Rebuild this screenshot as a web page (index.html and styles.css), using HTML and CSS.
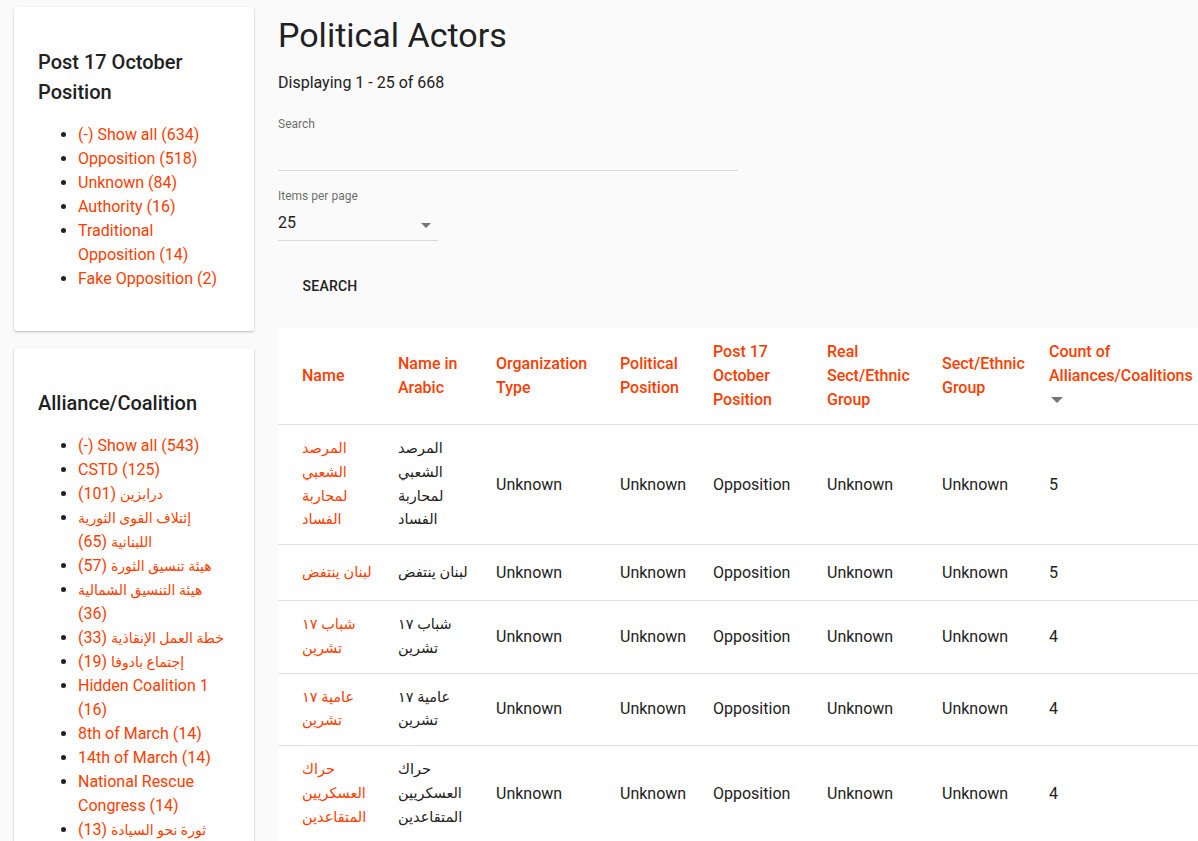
FILE: index.html
```html
<!DOCTYPE html>
<html lang="en">
<head>
<meta charset="utf-8">
<title>Political Actors</title>
<link rel="stylesheet" href="styles.css">
</head>
<body>
<div class="layout">
  <aside class="sidebar">
    <section class="card">
      <h2 class="card-title">Post 17 October Position</h2>
      <ul class="facet-list">
        <li><a href="#">(-) Show all (634)</a></li>
        <li><a href="#">Opposition (518)</a></li>
        <li><a href="#">Unknown (84)</a></li>
        <li><a href="#">Authority (16)</a></li>
        <li><a href="#">Traditional Opposition (14)</a></li>
        <li><a href="#">Fake Opposition (2)</a></li>
      </ul>
    </section>
    <section class="card">
      <h2 class="card-title">Alliance/Coalition</h2>
      <ul class="facet-list">
        <li><a href="#">(-) Show all (543)</a></li>
        <li><a href="#">CSTD (125)</a></li>
        <li><a href="#"><span class="ar-s">درابزين</span> (101)</a></li>
        <li><a href="#"><span class="ar-s">إئتلاف القوى الثورية اللبنانية</span> (65)</a></li>
        <li><a href="#"><span class="ar-s">هيئة تنسيق الثورة</span> (57)</a></li>
        <li><a href="#"><span class="ar-s">هيئة التنسيق الشمالية</span> (36)</a></li>
        <li><a href="#"><span class="ar-s">خطة العمل الإنقاذية</span> (33)</a></li>
        <li><a href="#"><span class="ar-s">إجتماع بادوفا</span> (19)</a></li>
        <li><a href="#">Hidden Coalition 1 (16)</a></li>
        <li><a href="#">8th of March (14)</a></li>
        <li><a href="#">14th of March (14)</a></li>
        <li><a href="#">National Rescue Congress (14)</a></li>
        <li><a href="#"><span class="ar-s">ثورة نحو السيادة</span> (13)</a></li>
      </ul>
    </section>
  </aside>

  <main class="main">
    <h1 class="page-title">Political Actors</h1>
    <p class="summary">Displaying 1 - 25 of 668</p>

    <form class="filters">
      <div class="field field-search">
        <label class="field-label" for="q">Search</label>
        <input class="text-input" id="q" type="text">
      </div>
      <div class="field field-select">
        <span class="field-label">Items per page</span>
        <div class="select">
          <span class="select-value">25</span>
          <span class="select-arrow"></span>
        </div>
      </div>
      <button class="btn" type="button">Search</button>
    </form>

    <table class="data-table">
      <thead>
        <tr>
          <th class="c-name">Name</th>
          <th class="c-arabic">Name in Arabic</th>
          <th class="c-org">Organization Type</th>
          <th class="c-pol">Political Position</th>
          <th class="c-post">Post 17 October Position</th>
          <th class="c-real">Real Sect/Ethnic Group</th>
          <th class="c-sect">Sect/Ethnic Group</th>
          <th class="c-count">Count of Alliances/Coalitions<span class="sort"></span></th>
        </tr>
      </thead>
      <tbody>
        <tr>
          <td class="ar"><a href="#">المرصد الشعبي لمحاربة الفساد</a></td>
          <td class="ar">المرصد الشعبي لمحاربة الفساد</td>
          <td>Unknown</td><td>Unknown</td><td>Opposition</td><td>Unknown</td><td>Unknown</td><td>5</td>
        </tr>
        <tr>
          <td class="ar"><a href="#">لبنان ينتفض</a></td>
          <td class="ar">لبنان ينتفض</td>
          <td>Unknown</td><td>Unknown</td><td>Opposition</td><td>Unknown</td><td>Unknown</td><td>5</td>
        </tr>
        <tr>
          <td class="ar"><a href="#">شباب ١٧ تشرين</a></td>
          <td class="ar">شباب ١٧ تشرين</td>
          <td>Unknown</td><td>Unknown</td><td>Opposition</td><td>Unknown</td><td>Unknown</td><td>4</td>
        </tr>
        <tr>
          <td class="ar"><a href="#">عامية ١٧ تشرين</a></td>
          <td class="ar">عامية ١٧ تشرين</td>
          <td>Unknown</td><td>Unknown</td><td>Opposition</td><td>Unknown</td><td>Unknown</td><td>4</td>
        </tr>
        <tr>
          <td class="ar"><a href="#">حراك العسكريين المتقاعدين</a></td>
          <td class="ar">حراك العسكريين المتقاعدين</td>
          <td>Unknown</td><td>Unknown</td><td>Opposition</td><td>Unknown</td><td>Unknown</td><td>4</td>
        </tr>
      </tbody>
    </table>
  </main>
</div>
</body>
</html>
```
FILE: styles.css
```css
html {
  scrollbar-width: none;
}

body {
  margin: 0;
  background: #fafafa;
  color: #212121;
  font-family: Roboto, "DejaVu Sans", sans-serif;
  font-size: 16px;
  line-height: 24px;
}

a {
  color: #ff3d00;
  text-decoration: none;
}

.layout {
  display: flex;
  align-items: flex-start;
  gap: 24px;
  padding: 7px 0 0 14px;
}

.sidebar {
  flex: 0 0 240px;
  display: flex;
  flex-direction: column;
  gap: 17px;
}

.card {
  background: #fff;
  border-radius: 3px;
  box-shadow: 0 1px 3px rgba(0, 0, 0, 0.14), 0 1px 2px rgba(0, 0, 0, 0.12);
  padding: 24px;
}

.card-title {
  margin: 16px 0;
  font-size: 20px;
  font-weight: 500;
  line-height: 30px;
}

.facet-list {
  margin: 16px 0;
  padding-left: 40px;
}

.ar-s {
  font-size: 14px;
}

.main {
  flex: 1;
  min-width: 0;
}

.page-title {
  margin: 8px 0 16px;
  font-size: 34px;
  font-weight: 400;
  line-height: 40px;
}

.summary {
  margin: 0;
}

.filters {
  margin-top: 21px;
}

.field-label {
  display: block;
  font-size: 12px;
  line-height: 16px;
  color: rgba(0, 0, 0, 0.6);
}

.field-search {
  width: 460px;
}

.text-input {
  display: block;
  box-sizing: border-box;
  width: 100%;
  height: 39px;
  border: 0;
  border-bottom: 1px solid rgba(0, 0, 0, 0.13);
  background: transparent;
  font: inherit;
  outline: none;
  padding: 0;
}

.field-select {
  width: 160px;
  margin-top: 17px;
}

.select {
  display: flex;
  align-items: center;
  justify-content: space-between;
  padding: 7px 7px 5px 0;
  border-bottom: 1px solid rgba(0, 0, 0, 0.13);
}

.select-arrow {
  width: 0;
  height: 0;
  margin-top: 4px;
  border-left: 5px solid transparent;
  border-right: 5px solid transparent;
  border-top: 5px solid #757575;
}

.btn {
  display: block;
  margin: 27px 0 24px 8px;
  min-width: 88px;
  height: 36px;
  padding: 0 16px;
  border: 0;
  background: transparent;
  color: #212121;
  font-family: Roboto, sans-serif;
  font-size: 14px;
  font-weight: 500;
  text-transform: uppercase;
  letter-spacing: 0.2px;
}

.data-table {
  table-layout: fixed;
  width: 939px;
  border-collapse: collapse;
  background: #fff;
}

.data-table th,
.data-table td {
  box-sizing: border-box;
  padding: 12px 0 12px 24px;
  text-align: left;
  vertical-align: middle;
}

.data-table th {
  color: #ff3d00;
  font-weight: 500;
}

.data-table td {
  border-top: 1px solid #e0e0e0;
  height: 56px;
}

.data-table td.ar {
  font-size: 14.5px;
  line-height: 23.75px;
}

.c-name { width: 96px; }
.c-arabic { width: 98px; }
.c-org { width: 124px; }
.c-pol { width: 93px; }
.c-post { width: 114px; }
.c-real { width: 115px; }
.c-sect { width: 107px; }
.data-table .c-count { width: 192px; padding-right: 24px; }

.sort {
  display: flex;
  align-items: center;
  height: 24px;
}

.sort::before {
  content: "";
  margin-left: 2px;
  border-left: 6px solid transparent;
  border-right: 6px solid transparent;
  border-top: 6px solid #757575;
}
```
